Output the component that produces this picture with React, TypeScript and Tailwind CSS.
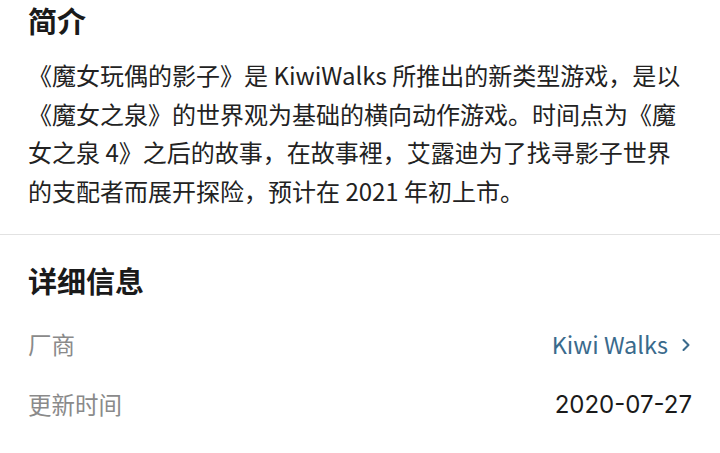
import { ChevronRight } from 'lucide-react';

const font = { fontFamily: '"Noto Sans CJK SC", "Noto Sans", sans-serif' };

function InfoRow({ label, value, link }: { label: string; value: string; link?: boolean }) {
  return (
    <div className="flex items-center justify-between h-[60px]">
      <span className="text-[23.5px] text-[#8a8a8a]">{label}</span>
      {link ? (
        <span className="flex items-center gap-[8px] text-[23.5px] text-[#3a6a8c]">
          {value}
          <ChevronRight className="w-5 h-5 -mr-[4px]" strokeWidth={2.5} />
        </span>
      ) : (
        <span className="text-[24px] text-[#1a1a1a]" style={{ fontFamily: 'Inter, "Noto Sans", sans-serif' }}>
          {value}
        </span>
      )}
    </div>
  );
}

export default function App() {
  return (
    <div className="w-[720px] h-[453px] bg-white overflow-hidden" style={font}>
      {/* 简介 */}
      <section className="px-7 pb-6">
        <h2 className="text-[29px] font-bold leading-[40px] text-[#1a1a1a]">简介</h2>
        <p className="mt-[16px] text-[24px] leading-[38.5px] text-[#222]">
          《魔女玩偶的影子》是 KiwiWalks 所推出的新类型游戏，是以《魔女之泉》的世界观为基础的横向动作游戏。时间点为《魔女之泉 4》之后的故事，在故事裡，艾露迪为了找寻影子世界的支配者而展开探险，预计在 2021 年初上市。
        </p>
      </section>

      <div className="h-px bg-[#e2e2e2]" />

      {/* 详细信息 */}
      <section className="px-7 pt-[25px]">
        <h2 className="text-[29px] font-bold leading-[40px] text-[#1a1a1a]">详细信息</h2>
        <div className="mt-[15px]">
          <InfoRow label="厂商" value="Kiwi Walks" link />
          <InfoRow label="更新时间" value="2020-07-27" />
        </div>
      </section>
    </div>
  );
}
